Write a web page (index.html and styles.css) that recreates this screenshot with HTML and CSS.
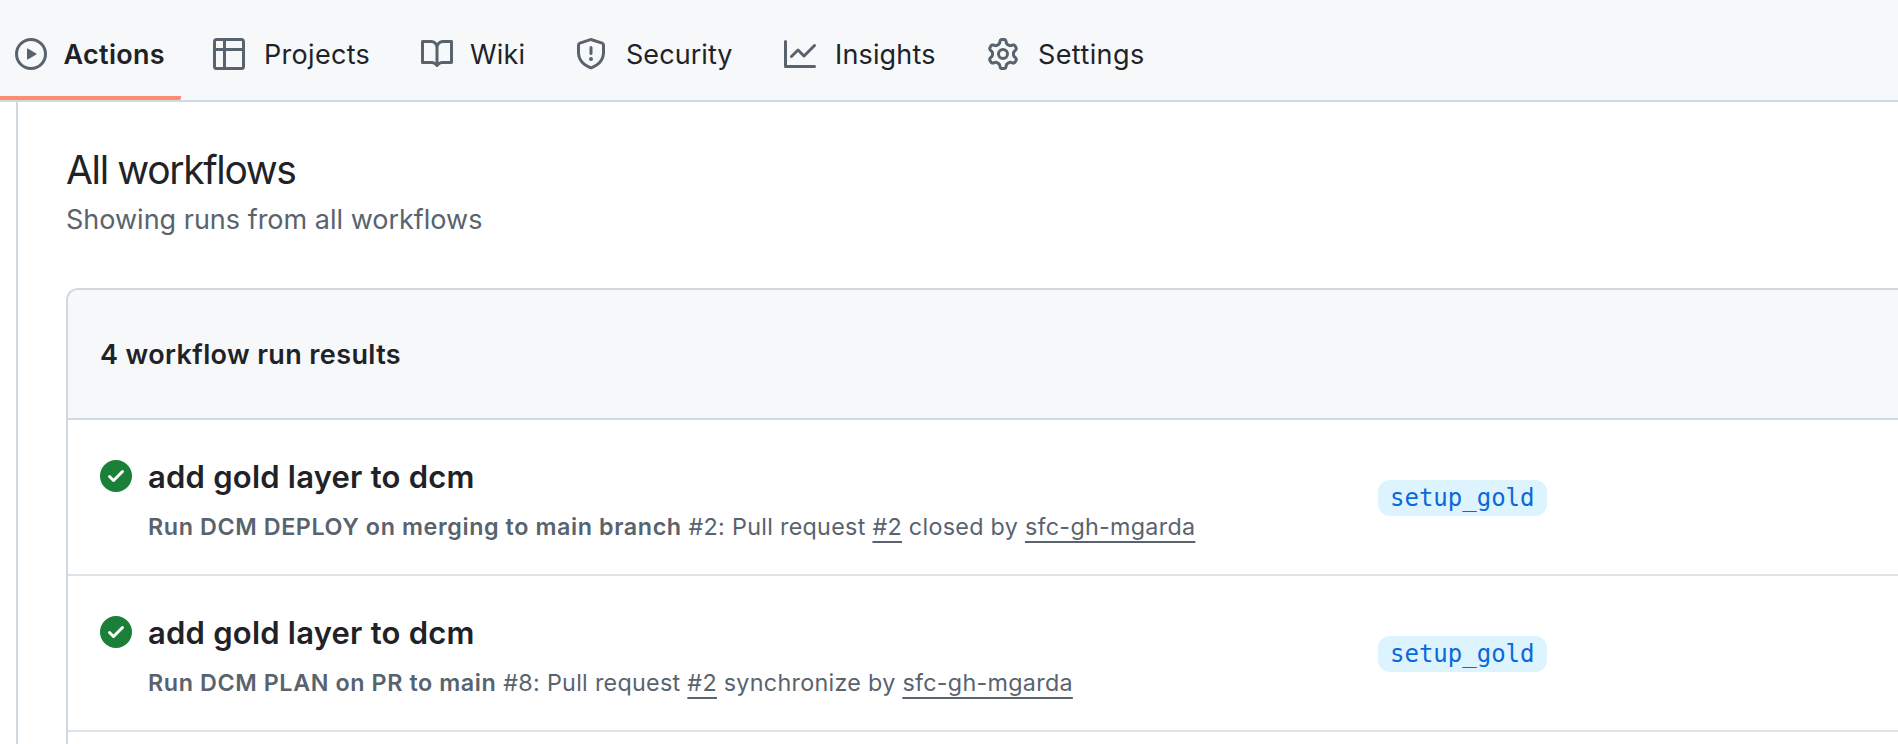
FILE: index.html
```html
<!DOCTYPE html>
<html lang="en">
<head>
<meta charset="utf-8">
<title>All workflows</title>
<link rel="stylesheet" href="styles.css">
</head>
<body>
<nav class="tabs">
  <a class="tab tab-actions selected"><svg class="icon" viewBox="0 0 16 16"><path d="M8 0a8 8 0 1 1 0 16A8 8 0 0 1 8 0ZM1.5 8a6.5 6.5 0 1 0 13 0 6.5 6.5 0 0 0-13 0Zm4.879-2.773 4.264 2.559a.25.25 0 0 1 0 .428l-4.264 2.559A.25.25 0 0 1 6 10.559V5.442a.25.25 0 0 1 .379-.215Z"/></svg><span class="label">Actions</span></a>
  <a class="tab tab-projects"><svg class="icon" viewBox="0 0 16 16"><path d="M0 1.75C0 .784.784 0 1.75 0h12.5C15.216 0 16 .784 16 1.75v12.5A1.75 1.75 0 0 1 14.25 16H1.75A1.75 1.75 0 0 1 0 14.25ZM6.5 6.5v8h7.75a.25.25 0 0 0 .25-.25V6.5Zm8-1.5V1.75a.25.25 0 0 0-.25-.25H6.5V5Zm-13 1.5v7.75c0 .138.112.25.25.25H5v-8ZM5 5V1.5H1.75a.25.25 0 0 0-.25.25V5Z"/></svg><span class="label">Projects</span></a>
  <a class="tab tab-wiki"><svg class="icon" viewBox="0 0 16 16"><path d="M0 1.75A.75.75 0 0 1 .75 1h4.253c1.227 0 2.317.59 3 1.501A3.743 3.743 0 0 1 11.006 1h4.245a.75.75 0 0 1 .75.75v10.5a.75.75 0 0 1-.75.75h-4.507a2.25 2.25 0 0 0-1.591.659l-.622.621a.75.75 0 0 1-1.06 0l-.622-.621A2.25 2.25 0 0 0 5.258 13H.75a.75.75 0 0 1-.75-.75Zm7.251 10.324.004-5.073-.002-2.253A2.25 2.25 0 0 0 5.003 2.5H1.5v9h3.757a3.75 3.75 0 0 1 1.994.574ZM8.755 4.75l-.004 7.322a3.752 3.752 0 0 1 1.992-.572H14.5v-9h-3.495a2.25 2.25 0 0 0-2.25 2.25Z"/></svg><span class="label">Wiki</span></a>
  <a class="tab tab-security"><svg class="icon" viewBox="0 0 16 16"><path d="M7.467.133a1.748 1.748 0 0 1 1.066 0l5.25 1.68A1.75 1.75 0 0 1 15 3.48V7c0 1.566-.32 3.182-1.303 4.682-.983 1.498-2.585 2.813-5.032 3.855a1.697 1.697 0 0 1-1.33 0c-2.447-1.042-4.049-2.357-5.032-3.855C1.32 10.182 1 8.566 1 7V3.48a1.75 1.75 0 0 1 1.217-1.667Zm.61 1.429a.25.25 0 0 0-.153 0l-5.25 1.68a.25.25 0 0 0-.174.238V7c0 1.358.275 2.666 1.057 3.86.784 1.194 2.121 2.34 4.366 3.297a.196.196 0 0 0 .154 0c2.245-.956 3.582-2.104 4.366-3.298C13.225 9.666 13.5 8.36 13.5 7V3.48a.251.251 0 0 0-.174-.237l-5.25-1.68ZM8.75 4.75v3a.75.75 0 0 1-1.5 0v-3a.75.75 0 0 1 1.5 0ZM9 10.5a1 1 0 1 1-2 0 1 1 0 0 1 2 0Z"/></svg><span class="label">Security</span></a>
  <a class="tab tab-insights"><svg class="icon" viewBox="0 0 16 16"><path d="M1.5 1.75V13.5h13.75a.75.75 0 0 1 0 1.5H.75a.75.75 0 0 1-.75-.75V1.75a.75.75 0 0 1 1.5 0Zm14.28 2.53-5.25 5.25a.75.75 0 0 1-1.06 0L7 7.06 4.28 9.78a.751.751 0 0 1-1.042-.018.751.751 0 0 1-.018-1.042l3.25-3.25a.75.75 0 0 1 1.06 0L10 7.94l4.72-4.72a.751.751 0 0 1 1.042.018.751.751 0 0 1 .018 1.042Z"/></svg><span class="label">Insights</span></a>
  <a class="tab tab-settings"><svg class="icon" viewBox="0 0 16 16"><path d="M8 0a8.2 8.2 0 0 1 .701.031C9.444.095 9.99.645 10.16 1.29l.288 1.107c.018.066.079.158.212.224.231.114.454.243.668.386.123.082.233.09.299.071l1.103-.303c.644-.176 1.392.021 1.82.63.27.385.506.792.704 1.218.315.675.111 1.422-.364 1.891l-.814.806c-.049.048-.098.147-.088.294.016.257.016.515 0 .772-.01.147.038.246.088.294l.814.806c.475.469.679 1.216.364 1.891a7.977 7.977 0 0 1-.704 1.217c-.428.61-1.176.807-1.82.63l-1.102-.302c-.067-.019-.177-.011-.3.071a5.909 5.909 0 0 1-.668.386c-.133.066-.194.158-.211.224l-.29 1.106c-.168.646-.715 1.196-1.458 1.26a8.006 8.006 0 0 1-1.402 0c-.743-.064-1.289-.614-1.458-1.26l-.289-1.106c-.018-.066-.079-.158-.212-.224a5.738 5.738 0 0 1-.668-.386c-.123-.082-.233-.09-.299-.071l-1.103.303c-.644.176-1.392-.021-1.82-.63a8.12 8.12 0 0 1-.704-1.218c-.315-.675-.111-1.422.363-1.891l.815-.806c.05-.048.098-.147.088-.294a6.214 6.214 0 0 1 0-.772c.01-.147-.038-.246-.088-.294l-.815-.806C.635 6.045.431 5.298.746 4.623a7.92 7.92 0 0 1 .704-1.217c.428-.61 1.176-.807 1.82-.63l1.102.302c.067.019.177.011.3-.071.214-.143.437-.272.668-.386.133-.066.194-.158.211-.224l.29-1.106C6.009.645 6.556.095 7.299.03 7.53.01 7.764 0 8 0Zm-.571 1.525c-.036.003-.108.036-.137.146l-.289 1.105c-.147.561-.549.967-.998 1.189-.173.086-.34.183-.5.29-.417.278-.97.423-1.529.27l-1.103-.303c-.109-.03-.175.016-.195.045-.22.312-.412.644-.573.99-.014.031-.021.11.059.19l.815.806c.411.406.562.957.53 1.456a4.709 4.709 0 0 0 0 .582c.032.499-.119 1.05-.53 1.456l-.815.806c-.081.08-.073.159-.059.19.162.346.353.677.573.989.02.03.085.076.195.046l1.102-.303c.56-.153 1.113-.008 1.53.27.161.107.328.204.501.29.447.222.85.629.997 1.189l.289 1.105c.029.109.101.143.137.146a6.6 6.6 0 0 0 1.142 0c.036-.003.108-.036.137-.146l.289-1.105c.147-.561.549-.967.998-1.189.173-.086.34-.183.5-.29.417-.278.97-.423 1.529-.27l1.103.303c.109.029.175-.016.195-.045.22-.313.411-.644.573-.99.014-.031.021-.11-.059-.19l-.815-.806c-.411-.406-.562-.957-.53-1.456a4.709 4.709 0 0 0 0-.582c-.032-.499.119-1.05.53-1.456l.815-.806c.081-.08.073-.159.059-.19a6.464 6.464 0 0 0-.573-.989c-.02-.03-.085-.076-.195-.046l-1.102.303c-.56.153-1.113.008-1.53-.27a4.44 4.44 0 0 0-.501-.29c-.447-.222-.85-.629-.997-1.189l-.289-1.105c-.029-.11-.101-.143-.137-.146a6.6 6.6 0 0 0-1.142 0ZM11 8a3 3 0 1 1-6 0 3 3 0 0 1 6 0ZM9.5 8a1.5 1.5 0 1 0-3.001.001A1.5 1.5 0 0 0 9.5 8Z"/></svg><span class="label">Settings</span></a>
</nav>
<main class="content">
  <h1 class="title">All workflows</h1>
  <p class="subtitle">Showing runs from all workflows</p>
  <section class="runs">
    <header class="runs-header">4 workflow run results</header>
    <article class="run">
      <svg class="icon check" viewBox="0 0 16 16"><path d="M8 16A8 8 0 1 1 8 0a8 8 0 0 1 0 16Zm3.78-9.72a.751.751 0 0 0-.018-1.042.751.751 0 0 0-1.042-.018L6.75 9.19 5.28 7.72a.751.751 0 0 0-1.042.018.751.751 0 0 0-.018 1.042l2 2a.75.75 0 0 0 1.06 0Z"/></svg>
      <div class="info">
        <h2 class="run-title">add gold layer to dcm</h2>
        <p class="meta"><b>Run DCM DEPLOY on merging to main branch</b> #2: Pull request <a class="link">#2</a> closed by <a class="link">sfc-gh-mgarda</a></p>
      </div>
      <span class="branch">setup_gold</span>
    </article>
    <article class="run">
      <svg class="icon check" viewBox="0 0 16 16"><path d="M8 16A8 8 0 1 1 8 0a8 8 0 0 1 0 16Zm3.78-9.72a.751.751 0 0 0-.018-1.042.751.751 0 0 0-1.042-.018L6.75 9.19 5.28 7.72a.751.751 0 0 0-1.042.018.751.751 0 0 0-.018 1.042l2 2a.75.75 0 0 0 1.06 0Z"/></svg>
      <div class="info">
        <h2 class="run-title">add gold layer to dcm</h2>
        <p class="meta"><b>Run DCM PLAN on PR to main</b> #8: Pull request <a class="link">#2</a> synchronize by <a class="link">sfc-gh-mgarda</a></p>
      </div>
      <span class="branch">setup_gold</span>
    </article>
  </section>
</main>
</body>
</html>
```
FILE: styles.css
```css
* { box-sizing: border-box; }
body {
  margin: 0;
  height: 744px;
  overflow: hidden;
  display: flex;
  flex-direction: column;
  background: #fff;
  color: #1f2328;
  font-family: Inter, "Liberation Sans", sans-serif;
  font-size: 27px;
}
h1, h2, p { margin: 0; white-space: nowrap; }
.icon { display: block; flex: none; width: 32px; height: 32px; fill: #59636e; }
.tabs {
  flex: none;
  display: flex;
  height: 102px;
  background: #f6f8fa;
  border-bottom: 2px solid #d1d9e0;
}
.tab { display: flex; flex: none; align-items: flex-start; padding-top: 38px; height: 100px; }
.label { margin-left: 19px; line-height: 33px; white-space: nowrap; }
.tab-actions { width: 181px; padding-left: 15px; margin-right: 32px; letter-spacing: 0.3px; }
.tab-projects { width: 208px; letter-spacing: 0.3px; }
.tab-wiki { width: 154px; letter-spacing: 0.2px; }
.tab-security { width: 209px; letter-spacing: 0.05px; }
.tab-insights { width: 203px; letter-spacing: 0.15px; }
.tab-settings { letter-spacing: 0.4px; }
.tab-actions .label { margin-left: 16.5px; }
.tab-wiki .label { margin-left: 17px; }
.selected { font-weight: 600; border-bottom: 4px solid #fd8c73; border-bottom-right-radius: 2px; }
.content {
  flex: 1;
  min-height: 0;
  display: flex;
  flex-direction: column;
  margin-left: 16px;
  padding: 40px 0 0 48px;
  border-left: 2px solid #d1d9e0;
}
.title { font-size: 39px; font-weight: 400; line-height: 55px; letter-spacing: -1.35px; }
.subtitle { color: #59636e; line-height: 45px; }
.runs {
  flex: 1;
  min-height: 0;
  margin-top: 46px;
  border: 2px solid #d1d9e0;
  border-right: 0;
  border-bottom: 0;
  border-top-left-radius: 12px;
  overflow: hidden;
}
.runs-header {
  height: 130px;
  padding-left: 32px;
  background: #f6f8fa;
  border-bottom: 2px solid #d1d9e0;
  font-weight: 600;
  line-height: 129px;
  letter-spacing: 0.38px;
}
.run {
  display: grid;
  grid-template-columns: 32px 1230px auto;
  justify-content: start;
  align-items: start;
  height: 156px;
  padding-left: 32px;
  border-bottom: 2px solid #dee3e8;
}
.check { margin-top: 40px; fill: #1a7f37; }
.info { padding: 33px 0 0 16px; }
.run-title { font-size: 31px; font-weight: 600; line-height: 47px; letter-spacing: 0.22px; }
.meta { margin-top: 9px; color: #59636e; font-size: 23.3px; line-height: 35px; letter-spacing: 0.3px; }
.meta b { font-weight: 600; letter-spacing: 0.6px; }
.link {
  text-decoration: underline 2px;
  text-underline-offset: 6px;
  text-decoration-skip-ink: none;
}
.branch {
  margin: 60px 0 0 16px;
  padding: 0 12px;
  height: 36px;
  border-radius: 12px;
  background: #ddf4ff;
  color: #0969da;
  font-family: "DejaVu Sans Mono", monospace;
  font-size: 24px;
  line-height: 36px;
}
```
